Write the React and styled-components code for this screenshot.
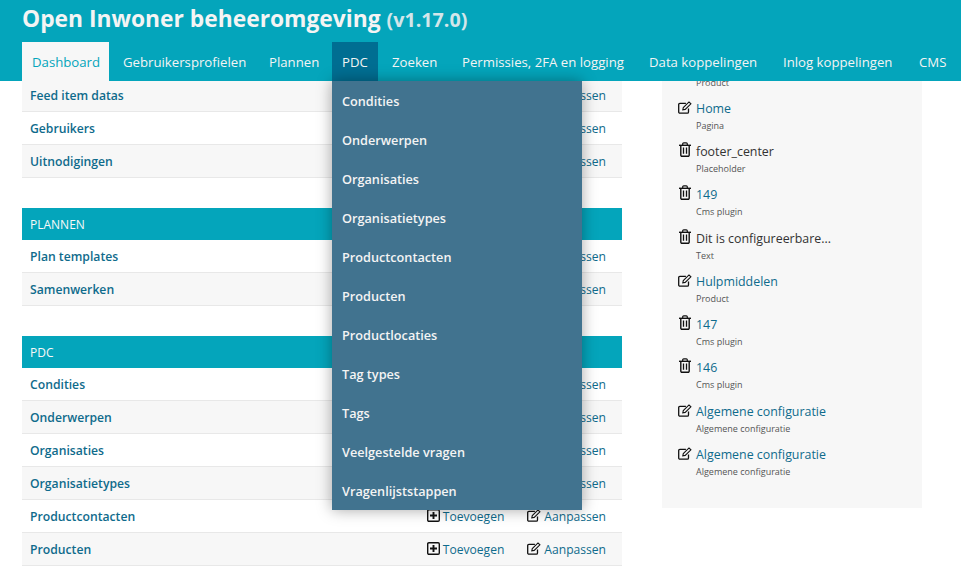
import styled, { createGlobalStyle } from 'styled-components';

const navItems = [
  { label: 'Dashboard', width: 87 },
  { label: 'Gebruikersprofielen', width: 142 },
  { label: 'Plannen', width: 69 },
  { label: 'PDC', width: 46 },
  { label: 'Zoeken', width: 66 },
  { label: 'Permissies, 2FA en logging', width: 183 },
  { label: 'Data koppelingen', width: 130 },
  { label: 'Inlog koppelingen', width: 132 },
  { label: 'CMS', width: 49 },
];

const pdcMenu = [
  'Condities',
  'Onderwerpen',
  'Organisaties',
  'Organisatietypes',
  'Productcontacten',
  'Producten',
  'Productlocaties',
  'Tag types',
  'Tags',
  'Veelgestelde vragen',
  'Vragenlijststappen',
];

const modules = [
  {
    rows: ['Feed item datas', 'Gebruikers', 'Uitnodigingen'],
  },
  {
    title: 'PLANNEN',
    rows: ['Plan templates', 'Samenwerken'],
  },
  {
    title: 'PDC',
    rows: ['Condities', 'Onderwerpen', 'Organisaties', 'Organisatietypes', 'Productcontacten', 'Producten'],
  },
];

const actions = [
  { icon: 'edit', name: 'Product', type: 'Product' },
  { icon: 'edit', name: 'Home', type: 'Pagina' },
  { icon: 'trash', name: 'footer_center', type: 'Placeholder' },
  { icon: 'trash', name: '149', type: 'Cms plugin' },
  { icon: 'trash', name: 'Dit is configureerbare...', type: 'Text' },
  { icon: 'edit', name: 'Hulpmiddelen', type: 'Product' },
  { icon: 'trash', name: '147', type: 'Cms plugin' },
  { icon: 'trash', name: '146', type: 'Cms plugin' },
  { icon: 'edit', name: 'Algemene configuratie', type: 'Algemene configuratie' },
  { icon: 'edit', name: 'Algemene configuratie', type: 'Algemene configuratie' },
];

const EditIcon = () => (
  <svg width="14" height="13" viewBox="0 0 14 13" fill="none" stroke="#111">
    <path d="M10.5 7.5V11a1.2 1.2 0 0 1-1.2 1.2H1.9A1.2 1.2 0 0 1 .7 11V3.6a1.2 1.2 0 0 1 1.2-1.2h6" strokeWidth="1.3" />
    <path d="M4.8 8.8l.5-2.3L11 .9l1.9 1.9-5.7 5.6z" strokeWidth="1.1" />
  </svg>
);

const TrashIcon = () => (
  <svg width="12" height="15" viewBox="0 0 12 15" fill="none" stroke="#111">
    <path d="M1.8 3.5v9.6a1.2 1.2 0 0 0 1.2 1.2h6a1.2 1.2 0 0 0 1.2-1.2V3.5" strokeWidth="1.4" />
    <path d="M0 3.3h12" strokeWidth="1.4" />
    <path d="M3.7 3V1.8A1 1 0 0 1 4.7.8h2.6a1 1 0 0 1 1 1V3" strokeWidth="1.2" />
    <path d="M4.5 5.5v6.3M7.5 5.5v6.3" strokeWidth="1.3" />
  </svg>
);

const PlusIcon = () => (
  <svg width="13" height="13" viewBox="0 0 13 13" fill="none" stroke="#111">
    <rect x=".7" y=".7" width="11.6" height="11.6" rx="1.2" strokeWidth="1.4" />
    <path d="M6.5 3v7M3 6.5h7" strokeWidth="1.9" />
  </svg>
);

const App = () => {
  return (
    <>
      <GlobalStyle />
      <Header>
        <Title>
          Open Inwoner beheeromgeving <Version>(v1.17.0)</Version>
        </Title>
        <Nav>
          {navItems.map((item) => (
            <NavItem
              key={item.label}
              $width={item.width}
              $active={item.label === 'Dashboard'}
              $open={item.label === 'PDC'}
            >
              {item.label}
              {item.label === 'PDC' && (
                <Dropdown>
                  {pdcMenu.map((entry) => (
                    <DropdownItem key={entry}>{entry}</DropdownItem>
                  ))}
                </Dropdown>
              )}
            </NavItem>
          ))}
        </Nav>
      </Header>
      <Main>
        <Columns>
          <Modules>
            {modules.map((mod) => (
              <section key={mod.rows[0]}>
                {mod.title && <Caption>{mod.title}</Caption>}
                {mod.rows.map((row, i) => (
                  <Row key={row} $shaded={mod.title ? i % 2 === 1 : i % 2 === 0}>
                    <RowName>{row}</RowName>
                    <RowAction>
                      <PlusIcon />
                      Toevoegen
                    </RowAction>
                    <RowAction>
                      <EditIcon />
                      Aanpassen
                    </RowAction>
                  </Row>
                ))}
              </section>
            ))}
          </Modules>
          <Sidebar>
            {actions.map((action, i) => (
              <Action key={i}>
                <ActionIcon $trash={action.icon === 'trash'}>
                  {action.icon === 'edit' ? <EditIcon /> : <TrashIcon />}
                </ActionIcon>
                <div>
                  <ActionName $deleted={action.name === 'footer_center' || action.type === 'Text'}>
                    {action.name}
                  </ActionName>
                  <ActionType>{action.type}</ActionType>
                </div>
              </Action>
            ))}
          </Sidebar>
        </Columns>
      </Main>
    </>
  );
};

const GlobalStyle = createGlobalStyle`
  html, body {
    margin: 0;
    height: 100%;
    overflow: hidden;
    background: #fff;
    font-family: "Open Sans", "Liberation Sans", sans-serif;
    font-size: 13px;
    color: #333;
  }
`;

const Header = styled.header`
  position: relative;
  z-index: 10;
  height: 81px;
  box-sizing: border-box;
  padding: 0 22px;
  background: #04a5bb;
`;

const Title = styled.h1`
  margin: 0;
  height: 42px;
  font-size: 22.8px;
  line-height: 38px;
  font-weight: 700;
  color: #f4f4f4;
  white-space: nowrap;
`;

const Version = styled.span`
  font-size: 19.7px;
  color: #d3e6ea;
`;

const Nav = styled.nav`
  display: flex;
  gap: 4px;
  white-space: nowrap;
`;

const NavItem = styled.div`
  position: relative;
  flex: none;
  width: ${(p) => p.$width}px;
  height: 39px;
  box-sizing: border-box;
  padding-left: 10px;
  font-size: 13.2px;
  line-height: 41px;
  color: ${(p) => (p.$active ? '#04a5bb' : '#f4f4f4')};
  background: ${(p) => (p.$active ? '#f7f7f7' : p.$open ? '#006e92' : 'transparent')};
`;

const Dropdown = styled.div`
  position: absolute;
  top: 39px;
  left: 0;
  width: 250px;
  background: #41738f;
  box-shadow: 0 0 14px rgba(0, 0, 0, 0.35);
`;

const DropdownItem = styled.div`
  height: 39px;
  padding: 0 10px;
  font-size: 12.7px;
  font-weight: 600;
  line-height: 41px;
  color: #f4f4f4;
`;

const Main = styled.main`
  height: 488px;
  overflow: hidden;
`;

const Columns = styled.div`
  display: flex;
  align-items: flex-start;
  gap: 40px;
  margin-top: -2px;
  padding: 0 22px;
`;

const Modules = styled.div`
  display: flex;
  flex-direction: column;
  gap: 30px;
  width: 600px;
  flex: none;
`;

const Caption = styled.div`
  height: 32px;
  padding: 0 8px;
  font-size: 12px;
  line-height: 33px;
  color: #f8f8f8;
  background: #04a5bb;
`;

const Row = styled.div`
  display: flex;
  align-items: center;
  height: 33px;
  box-sizing: border-box;
  padding: 0 16px 0 8px;
  border-bottom: 1px solid #e8e8e8;
  background: ${(p) => (p.$shaded ? '#f7f7f7' : '#fff')};
`;

const RowName = styled.span`
  flex: 1;
  font-size: 12.2px;
  font-weight: 600;
  color: #0f6b8c;
`;

const RowAction = styled.span`
  display: flex;
  align-items: center;
  gap: 3px;
  margin-left: 23px;
  font-size: 12.1px;
  color: #0f6b8c;

  svg {
    margin-top: -2px;
  }
`;

const Sidebar = styled.aside`
  width: 260px;
  flex: none;
  box-sizing: border-box;
  padding: 0 16px 20px;
  margin-top: -23.4px;
  background: #f7f7f7;
`;

const Action = styled.div`
  display: flex;
  gap: 4px;
  height: 43.25px;
`;

const ActionIcon = styled.span`
  flex: none;
  width: 14px;
  padding-top: ${(p) => (p.$trash ? '0' : '1px')};
  padding-left: ${(p) => (p.$trash ? '1px' : '0')};
  box-sizing: border-box;
`;

const ActionName = styled.div`
  font-size: 12.4px;
  line-height: 20px;
  color: ${(p) => (p.$deleted ? '#333' : '#0f6b8c')};
`;

const ActionType = styled.div`
  margin-top: 1px;
  font-size: 9px;
  line-height: 12px;
  color: #555;
`;

export default App;
